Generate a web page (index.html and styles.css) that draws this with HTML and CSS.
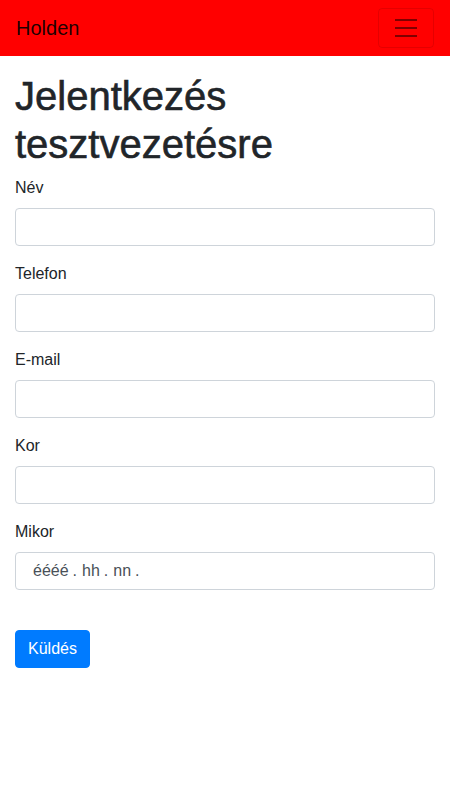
FILE: index.html
```html
<!DOCTYPE html>
<html lang="hu">
<head>
<meta charset="utf-8">
<title>Holden</title>
<link rel="stylesheet" href="styles.css">
</head>
<body>
<nav class="navbar">
  <a class="brand" href="#">Holden</a>
  <button class="toggler" type="button" aria-label="Menü">
    <svg class="toggler-icon" viewBox="0 0 30 30" width="30" height="30"><path d="M4 7h22M4 15h22M4 23h22" stroke="rgba(0,0,0,0.5)" stroke-width="2" stroke-linecap="butt" fill="none"/></svg>
  </button>
</nav>
<main class="container">
  <h1 class="title">Jelentkezés tesztvezetésre</h1>
  <form class="form">
    <div class="group">
      <label class="label" for="nev">Név</label>
      <input class="control" id="nev" type="text">
    </div>
    <div class="group">
      <label class="label" for="tel">Telefon</label>
      <input class="control" id="tel" type="text">
    </div>
    <div class="group">
      <label class="label" for="email">E-mail</label>
      <input class="control" id="email" type="text">
    </div>
    <div class="group">
      <label class="label" for="kor">Kor</label>
      <input class="control" id="kor" type="text">
    </div>
    <div class="group">
      <label class="label" for="mikor">Mikor</label>
      <div class="control date" id="mikor" tabindex="0"><span class="seg">éééé</span><span class="sep">.</span><span class="seg">hh</span><span class="sep">.</span><span class="seg">nn</span><span class="sep">.</span></div>
    </div>
    <div class="actions">
      <button class="btn" type="submit">Küldés</button>
    </div>
  </form>
</main>
</body>
</html>
```
FILE: styles.css
```css
* { box-sizing: border-box; }
html, body { margin: 0; padding: 0; }
body {
  font-family: "Liberation Sans", Arial, sans-serif;
  font-size: 16px;
  line-height: 1.5;
  color: #212529;
  background: #fff;
}
.navbar {
  background: #ff0000;
  height: 56px;
  padding: 8px 16px;
  display: flex;
  align-items: center;
  justify-content: space-between;
}
.brand {
  font-size: 20px;
  line-height: 30px;
  color: rgba(0,0,0,0.9);
  text-decoration: none;
}
.toggler {
  width: 56px;
  height: 40px;
  padding: 4px 12px;
  background: transparent;
  border: 1px solid rgba(0,0,0,0.1);
  border-radius: 4px;
  display: flex;
  align-items: center;
  justify-content: center;
}
.toggler-icon { display: block; }
.container { padding: 16px 15px 0; }
.title {
  margin: 0 0 8px;
  font-size: 40px;
  font-weight: 500;
  line-height: 1.2;
  -webkit-text-stroke: 0.6px #212529;
}
.form { margin: 0; }
.group { margin-bottom: 16px; }
.label {
  display: block;
  margin-bottom: 8px;
}
.control {
  display: block;
  width: 100%;
  height: 38px;
  padding: 6px 12px;
  font-family: inherit;
  font-size: 16px;
  line-height: 1.5;
  color: #495057;
  background: #fff;
  border: 1px solid #ced4da;
  border-radius: 4px;
  outline: none;
}
.date { padding-left: 17px; white-space: nowrap; }
.sep { padding: 0 5px 0 4px; }
.actions { padding-top: 24px; }
.btn {
  display: inline-block;
  height: 38px;
  padding: 6px 12px;
  font-family: inherit;
  font-size: 16px;
  line-height: 1.5;
  color: #fff;
  background: #007bff;
  border: 1px solid #007bff;
  border-radius: 4px;
}
```
